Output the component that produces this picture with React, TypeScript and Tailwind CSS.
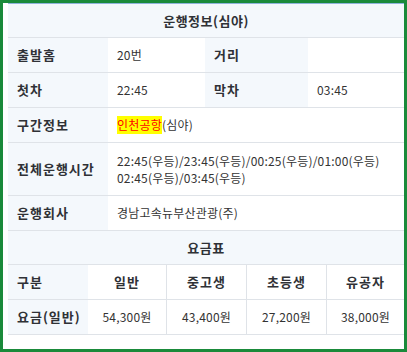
const font = { fontFamily: '"Noto Sans CJK KR", "Noto Sans", sans-serif' };

const label = 'flex items-center pl-[9px] bg-[#f4f8fc] font-bold text-[13px] tracking-[1px] text-[#2f3136]';
const value = 'flex items-center pl-[9px] bg-white text-[12px] tracking-[0.2px] text-[#333]';
const row = 'grid grid-cols-[100px_97px_103px_1fr] border-b border-[#dfe3e8]';
const wideRow = 'grid grid-cols-[100px_1fr] border-b border-[#dfe3e8]';

const fares = [
  { name: '일반', price: '54,300원' },
  { name: '중고생', price: '43,400원' },
  { name: '초등생', price: '27,200원' },
  { name: '유공자', price: '38,000원' },
];

export default function App() {
  return (
    <div
      className="w-[407px] h-[352px] border-[3px] border-[#1a8a3a] pl-[5px] bg-white overflow-hidden"
      style={font}
    >
      <div className="w-[396px] border-t border-[#8fb3dc]">
        {/* 운행정보 */}
        <div className="h-[34px] flex items-center justify-center bg-[#f4f8fc] border-b border-[#dfe3e8] font-bold text-[13px] tracking-[0.5px] text-[#2f3136]">
          운행정보(심야)
        </div>
        <div className={`${row} h-[35px]`}>
          <div className={label}>출발홈</div>
          <div className={value}>20번</div>
          <div className={label}>거리</div>
          <div className={value}></div>
        </div>
        <div className={`${row} h-[35px]`}>
          <div className={label}>첫차</div>
          <div className={value}>22:45</div>
          <div className={label}>막차</div>
          <div className={value}>03:45</div>
        </div>
        <div className={`${wideRow} h-[35px]`}>
          <div className={label}>구간정보</div>
          <div className={value}>
            <span className="bg-[#ffff00] text-[#ff0000]">인천공항</span>(심야)
          </div>
        </div>
        <div className={`${wideRow} h-[53px]`}>
          <div className={label}>전체운행시간</div>
          <div className={`${value} leading-[17px]`}>
            <div>
              22:45(우등)/23:45(우등)/00:25(우등)/01:00(우등)
              <br />
              02:45(우등)/03:45(우등)
            </div>
          </div>
        </div>
        <div className={`${wideRow} h-[35px]`}>
          <div className={label}>운행회사</div>
          <div className={value}>경남고속뉴부산관광(주)</div>
        </div>

        {/* 요금표 */}
        <div className="h-[34px] flex items-center justify-center bg-[#f4f8fc] border-b border-[#dfe3e8] font-bold text-[13px] tracking-[0.5px] text-[#2f3136]">
          요금표
        </div>
        <div className="grid grid-cols-[80px_79px_80px_80px_1fr] h-[35px] border-b border-[#dfe3e8]">
          <div className={label}>구분</div>
          {fares.map((f, i) => (
            <div
              key={f.name}
              className={`flex items-center justify-center bg-white font-bold text-[13px] tracking-[1px] text-[#2f3136] ${i < 3 ? 'border-r border-[#dfe3e8]' : ''}`}
            >
              {f.name}
            </div>
          ))}
        </div>
        <div className="grid grid-cols-[80px_79px_80px_80px_1fr] h-[35px] border-b border-[#dfe3e8]">
          <div className={label}>요금(일반)</div>
          {fares.map((f, i) => (
            <div
              key={f.name}
              className={`flex items-center justify-center bg-white text-[12px] tracking-[0.2px] text-[#333] ${i < 3 ? 'border-r border-[#dfe3e8]' : ''}`}
            >
              {f.price}
            </div>
          ))}
        </div>
      </div>
    </div>
  );
}
